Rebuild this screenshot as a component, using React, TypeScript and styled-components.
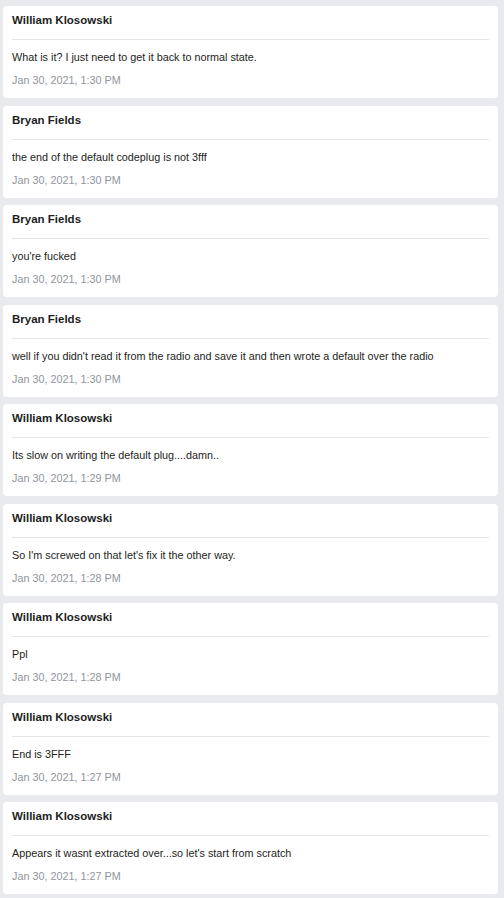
import React from "react";
import styled, { createGlobalStyle } from "styled-components";

const Global = createGlobalStyle`
  html, body { margin: 0; padding: 0; background: #e9eaee; }
  body { font-family: "Liberation Sans", Arial, sans-serif; }
`;

const List = styled.div`
  display: flex;
  flex-direction: column;
  gap: 7.5px;
  padding: 6px 6px 6px 3px;
`;

const Card = styled.div`
  background: #ffffff;
  border-radius: 4px;
  padding: 6px 9px 10px 9px;
  display: flex;
  flex-direction: column;
`;

const Name = styled.div`
  font-size: 11.5px;
  font-weight: 700;
  line-height: 16px;
  color: #1c1e21;
`;

const Divider = styled.div`
  height: 1px;
  background: #e4e5e8;
  margin: 11px 0 9px 0;
`;

const Message = styled.div`
  font-size: 10.8px;
  line-height: 16px;
  color: #1c1e21;
`;

const DateText = styled.div`
  font-size: 10.8px;
  line-height: 16px;
  color: #90949c;
  margin-top: 7px;
`;

const posts = [
  ["William Klosowski", "What is it? I just need to get it back to normal state.", "Jan 30, 2021, 1:30 PM"],
  ["Bryan Fields", "the end of the default codeplug is not 3fff", "Jan 30, 2021, 1:30 PM"],
  ["Bryan Fields", "you're fucked", "Jan 30, 2021, 1:30 PM"],
  ["Bryan Fields", "well if you didn't read it from the radio and save it and then wrote a default over the radio", "Jan 30, 2021, 1:30 PM"],
  ["William Klosowski", "Its slow on writing the default plug....damn..", "Jan 30, 2021, 1:29 PM"],
  ["William Klosowski", "So I'm screwed on that let's fix it the other way.", "Jan 30, 2021, 1:28 PM"],
  ["William Klosowski", "Ppl", "Jan 30, 2021, 1:28 PM"],
  ["William Klosowski", "End is 3FFF", "Jan 30, 2021, 1:27 PM"],
  ["William Klosowski", "Appears it wasnt extracted over...so let's start from scratch", "Jan 30, 2021, 1:27 PM"],
];

export default function App() {
  return (
    <>
      <Global />
      <List>
        {posts.map(([n, m, d], i) => (
          <Card key={i}>
            <Name>{n}</Name>
            <Divider />
            <Message>{m}</Message>
            <DateText>{d}</DateText>
          </Card>
        ))}
      </List>
    </>
  );
}
